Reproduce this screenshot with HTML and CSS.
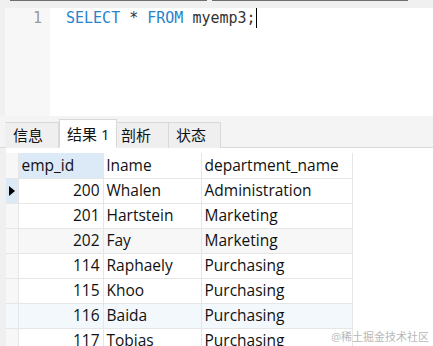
FILE: index.html
```html
<!DOCTYPE html>
<html lang="en">
<head>
  <meta charset="UTF-8" />
  <meta name="viewport" content="width=device-width, initial-scale=1.0" />
  <title>Query - myemp3</title>
  <link rel="stylesheet" href="styles.css">
</head>
<body>

  <!-- Toolbar edge -->
  <div class="top-strip">
    <span class="bar bar-left"></span>
    <span class="bar bar-right"></span>
  </div>

  <!-- SQL editor -->
  <div class="editor">
    <div class="gutter"><span class="line-no">1</span></div>
    <div class="code"><span class="kw">SELECT</span> * <span class="kw">FROM</span> myemp3;<span class="caret"></span></div>
  </div>

  <!-- Result tabs -->
  <div class="tabs">
    <div class="tab tab-info">信息</div>
    <div class="tab tab-result active">结果 1</div>
    <div class="tab tab-profile">剖析</div>
    <div class="tab tab-status">状态</div>
  </div>

  <!-- Result grid -->
  <div class="result">
    <table class="grid">
      <thead>
        <tr>
          <th class="row-head"></th>
          <th class="col-id selected">emp_id</th>
          <th class="col-name">lname</th>
          <th class="col-dept">department_name</th>
        </tr>
      </thead>
      <tbody>
        <tr class="current">
          <td class="row-head"><span class="pointer"></span></td>
          <td class="num">200</td><td>Whalen</td><td>Administration</td>
        </tr>
        <tr>
          <td class="row-head"></td>
          <td class="num">201</td><td>Hartstein</td><td>Marketing</td>
        </tr>
        <tr class="gray">
          <td class="row-head"></td>
          <td class="num">202</td><td>Fay</td><td>Marketing</td>
        </tr>
        <tr>
          <td class="row-head"></td>
          <td class="num">114</td><td>Raphaely</td><td>Purchasing</td>
        </tr>
        <tr>
          <td class="row-head"></td>
          <td class="num">115</td><td>Khoo</td><td>Purchasing</td>
        </tr>
        <tr class="blue">
          <td class="row-head"></td>
          <td class="num">116</td><td>Baida</td><td>Purchasing</td>
        </tr>
        <tr>
          <td class="row-head"></td>
          <td class="num">117</td><td>Tobias</td><td>Purchasing</td>
        </tr>
      </tbody>
    </table>
    <div class="watermark">@稀土掘金技术社区</div>
  </div>

</body>
</html>
```

FILE: styles.css
```css
/* Basic Reset */
* {
  margin: 0;
  padding: 0;
  box-sizing: border-box;
}

body {
  width: 433px;
  height: 346px;
  overflow: hidden;
  background-color: #f0f0f0;
  font-family: "Open Sans", "Noto Sans CJK SC", sans-serif;
  color: #111;
}

/* Toolbar edge */
.top-strip {
  height: 8px;
  display: flex;
  align-items: flex-start;
  padding-left: 10px;
  gap: 5px;
  background-color: #f0f0f0;
}

.top-strip .bar {
  height: 1px;
  background-color: #6e6e6e;
}

.bar-left {
  width: 197px;
}

.bar-right {
  width: 196px;
}

/* Editor */
.editor {
  height: 108px;
  display: flex;
  background-color: #ffffff;
}

.gutter {
  width: 50px;
  background-color: #f7f7f7;
  border-left: 5px solid #f0f0f0;
  text-align: right;
  padding-right: 8px;
}

.line-no {
  display: block;
  font-family: "DejaVu Sans Mono", monospace;
  font-size: 15px;
  line-height: 21px;
  color: #9a9a9a;
}

.code {
  flex: 1;
  padding-left: 16px;
  font-family: "DejaVu Sans Mono", monospace;
  font-size: 15px;
  line-height: 21px;
  color: #333;
  white-space: pre;
}

.code .kw {
  color: #2a83c9;
}

.caret {
  display: inline-block;
  width: 1px;
  height: 20px;
  background-color: #000;
  vertical-align: top;
}

/* Tabs */
.tabs {
  height: 32px;
  display: flex;
  align-items: flex-end;
  padding-left: 5px;
  background-color: #f4f4f4;
  border-bottom: 1px solid #d9d9d9;
}

.tab {
  height: 26px;
  margin-bottom: -1px;
  font-size: 15px;
  line-height: 25px;
  white-space: nowrap;
  background-color: #efefef;
  border: 1px solid #d9d9d9;
  border-left: none;
  border-bottom: none;
}

.tab-info {
  width: 54px;
  padding-left: 8px;
}

.tab-result {
  width: 58px;
  padding-left: 7px;
  border-left: 1px solid #d9d9d9;
}

.tab-profile {
  width: 52px;
  padding-left: 4px;
}

.tab-status {
  width: 52px;
  padding-left: 7px;
}

.tab.active {
  height: 29px;
  line-height: 29px;
  background-color: #ffffff;
  border-bottom: 1px solid #ffffff;
}

/* Result grid */
.result {
  position: relative;
  height: 198px;
  margin-left: 6px;
  padding-top: 5px;
  background-color: #ffffff;
}

.grid {
  border-collapse: collapse;
  font-size: 15.5px;
}

.grid th,
.grid td {
  height: 25px;
  padding: 0 3px;
  border: 1px solid #e6e6e6;
  font-weight: normal;
  text-align: left;
  white-space: nowrap;
  line-height: 23px;
}

.grid th {
  height: 25px;
  border-top: none;
}

.grid .row-head {
  width: 12px;
  padding: 0;
  background-color: #f7f7f7;
  border-left: none;
}

.col-id {
  width: 85px;
}

.col-name {
  width: 98px;
}

.col-dept {
  width: 151px;
}

.grid th.selected {
  background-color: #dce9f7;
}

.grid td.num {
  text-align: right;
}

.grid tr.current .row-head {
  background-color: #dce9f7;
}

.grid tr.gray td {
  background-color: #f7f7f7;
}

.grid tr.blue td {
  background-color: #f3f8fd;
}

.pointer {
  display: block;
  width: 0;
  height: 0;
  margin-left: 3px;
  border-top: 5px solid transparent;
  border-bottom: 5px solid transparent;
  border-left: 6px solid #000;
}

.watermark {
  position: absolute;
  right: 4px;
  bottom: 2px;
  font-size: 11px;
  color: #b8b8b8;
}
```
